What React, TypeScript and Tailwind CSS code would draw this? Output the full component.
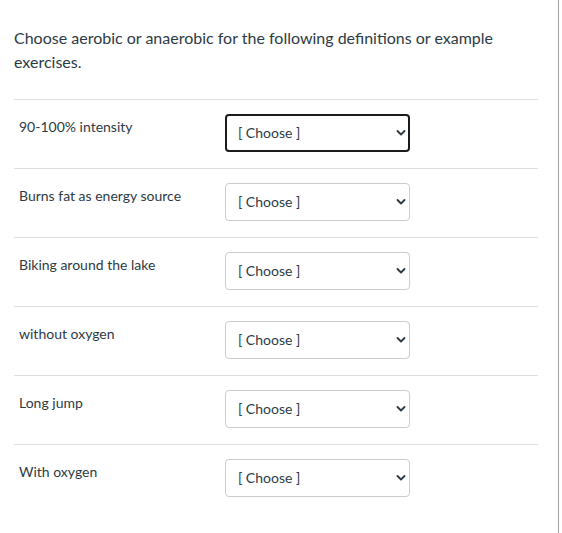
import React from "react";

const rows = [
  "90-100% intensity",
  "Burns fat as energy source",
  "Biking around the lake",
  "without oxygen",
  "Long jump",
  "With oxygen",
];

function Chevron() {
  return (
    <svg width="10" height="7" viewBox="0 0 10 7" className="pointer-events-none absolute right-[4px] top-1/2 -translate-y-1/2">
      <path d="M1.5 1.5 L5 5 L8.5 1.5" fill="none" stroke="#2d3b45" strokeWidth="1.9" strokeLinecap="round" strokeLinejoin="round" />
    </svg>
  );
}

export default function App() {
  return (
    <div className="h-[533px] w-[562px] bg-white" style={{ fontFamily: "Lato, 'Noto Sans', sans-serif" }}>
      <div className="h-[533px] w-[559px] border-r border-[#a3a3a3] pl-[14px] pr-[20px]">
        <p className="pt-[26px] text-[16px] leading-[24px] text-[#2d3b45]">
          Choose aerobic or anaerobic for the following definitions or example exercises.
        </p>
        <div className="mt-[25px]">
          {rows.map((label, i) => (
            <div key={label} className="flex border-t border-[#dcdfe1] pt-[14px] pb-[16px]">
              <div className="w-[211px] pl-[5px] pt-[3px] text-[14px] leading-[20px] text-[#2d3b45]">{label}</div>
              <div className="relative w-[185px] h-[38px]">
                <div
                  className={
                    i === 0
                      ? "flex h-full w-full items-center rounded-[4px] border-2 border-[#1b1b1b] pl-[11px] pb-[2px] text-[14px] text-[#2d3b45]"
                      : "flex h-full w-full items-center rounded-[4px] border border-[#c7cdd1] pl-[12px] pb-[2px] text-[14px] text-[#2d3b45]"
                  }
                >
                  [ Choose ]
                </div>
                <Chevron />
              </div>
            </div>
          ))}
        </div>
      </div>
    </div>
  );
}
